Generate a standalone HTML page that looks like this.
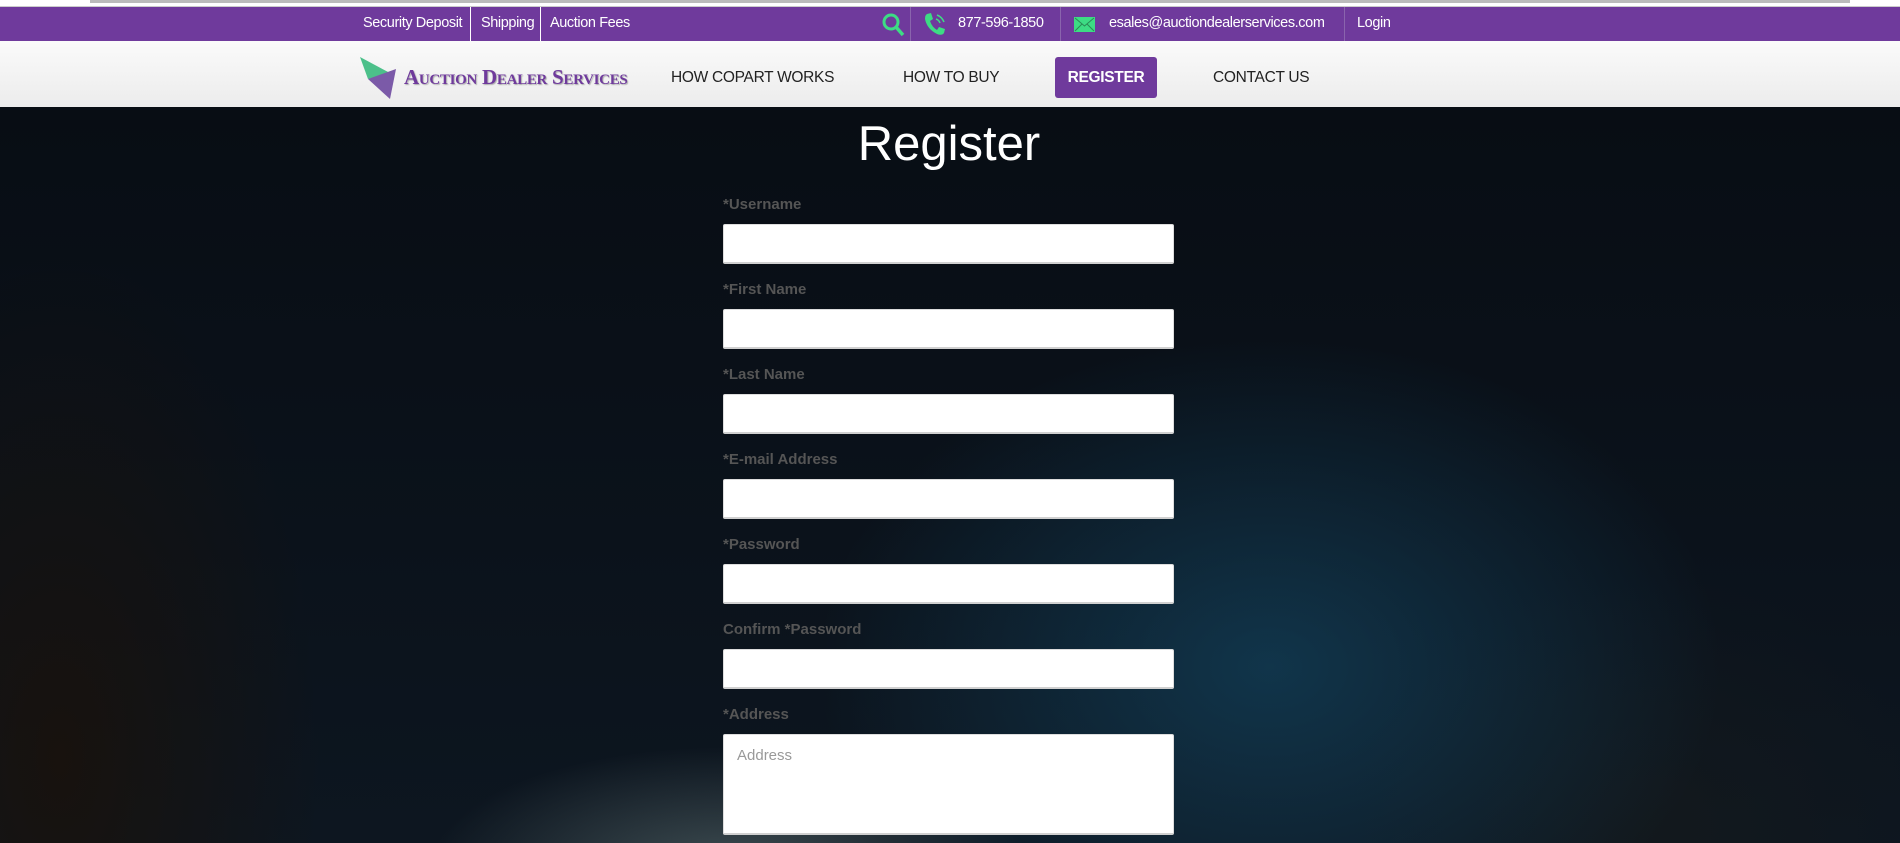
<!DOCTYPE html>
<html><head><meta charset="utf-8"><style>
*{margin:0;padding:0;box-sizing:border-box}
body{width:1900px;height:843px;overflow:hidden;font-family:"Liberation Sans",Arial,sans-serif;position:relative;background:#0b1018}
.topline{position:absolute;left:0;top:0;width:1900px;height:7px;background:#fff;border-bottom:1px solid #ccc}
.topline:before{content:"";position:absolute;left:90px;right:50px;top:0;height:3px;background:#bbb}
.bar{position:absolute;top:7px;left:0;width:1900px;height:34px;background:#6f3a9c;color:#fff;font-size:14.5px;letter-spacing:-0.4px}
.bar span{position:absolute;top:8px;white-space:nowrap}
.sep{position:absolute;top:0;width:1px;height:34px;background:#fff}
.sep2{position:absolute;top:0;width:1px;height:34px;background:#8a64ad}
.nav{position:absolute;top:41px;left:0;width:1900px;height:66px;background:linear-gradient(#fafafa,#ececec)}
.nav .it{position:absolute;top:28px;font-size:15.5px;color:#222;letter-spacing:-0.3px}
.reg{position:absolute;left:1055px;top:16px;width:102px;height:41px;background:#6f3a9c;border-radius:3px;color:#fff;font-weight:bold;font-size:15.5px;letter-spacing:-0.3px;text-align:center;line-height:41px}
.main{position:absolute;top:107px;left:0;width:1900px;height:736px;
background:
radial-gradient(ellipse 300px 120px at 730px 760px,rgba(110,130,130,.5),transparent),
radial-gradient(ellipse 450px 330px at 1270px 560px,rgba(20,75,105,.6),transparent),
radial-gradient(ellipse 300px 250px at 1650px 720px,rgba(20,25,28,.8),transparent),
radial-gradient(ellipse 260px 500px at 60px 650px,rgba(25,18,12,.9),transparent),
linear-gradient(#080d14,#0d1620)}
h1{position:absolute;top:9px;left:0;width:1898px;text-align:center;color:#fff;font-weight:normal;font-size:49px}
label{position:absolute;left:723px;font-size:15px;font-weight:bold;color:#555}
.in{position:absolute;left:723px;width:451px;height:40px;background:#fff;border:1px solid #ddd;border-bottom:2px solid #d0d0d0;border-radius:2px}
.ta{height:101px;color:#999;font-size:15px;padding:12px 13px}
</style></head><body>
<div class="topline"></div>
<div class="bar">
<span style="left:363px">Security Deposit</span><div class="sep" style="left:470px"></div>
<span style="left:481px">Shipping</span><div class="sep" style="left:540px"></div>
<span style="left:550px">Auction Fees</span>
<svg style="position:absolute;left:881px;top:5px" width="24" height="25" viewBox="0 0 24 25"><circle cx="10" cy="10" r="7" fill="none" stroke="#3ddc84" stroke-width="3"/><line x1="15" y1="15" x2="22" y2="23" stroke="#3ddc84" stroke-width="3.5"/></svg>
<div class="sep2" style="left:910px"></div>
<svg style="position:absolute;left:922px;top:4px" width="26" height="26" viewBox="0 0 26 26"><path d="M5 3 L9 2 L11 8 L8 10 Q10 16 15 19 L17 16 L23 18 L22 22 Q20 25 15 23 Q5 18 3 8 Q3 4 5 3Z" fill="#3ddc84"/><path d="M14 8 Q17 9 18 12 M15 4 Q20 6 22 11" fill="none" stroke="#3ddc84" stroke-width="1.6"/></svg>
<span style="left:958px">877-596-1850</span>
<div class="sep2" style="left:1060px"></div>
<svg style="position:absolute;left:1074px;top:10px" width="21" height="15" viewBox="0 0 21 15"><rect width="21" height="15" fill="#3ddc84"/><path d="M1 1 L10.5 9 L20 1 M1 14 L8 7 M20 14 L13 7" stroke="#2a8a55" fill="none" stroke-width="1"/></svg>
<span style="left:1109px">esales@auctiondealerservices.com</span>
<div class="sep2" style="left:1344px"></div>
<span style="left:1357px">Login</span>
</div>
<div class="nav">
<svg style="position:absolute;left:360px;top:16px" width="42" height="42" viewBox="0 0 42 42"><polygon points="0,0 30,16 8,22" fill="#4cc08a"/><polygon points="8,22 36,12 30,42" fill="#7b5aa8"/></svg>
<div style="position:absolute;left:404px;top:24px;font-family:'Liberation Serif',serif;font-weight:bold;color:#6f3a9c;font-size:21px;font-variant:small-caps;letter-spacing:-0.3px;text-shadow:1px 1px 1px #aaa;white-space:nowrap">Auction Dealer Services</div>
<div class="it" style="left:671px">HOW COPART WORKS</div>
<div class="it" style="left:903px">HOW TO BUY</div>
<div class="reg">REGISTER</div>
<div class="it" style="left:1213px">CONTACT US</div>
</div>
<div class="main">
<h1>Register</h1>
</div>
<label style="top:196px">*Username</label><div class="in" style="top:224px"></div>
<label style="top:281px">*First Name</label><div class="in" style="top:309px"></div>
<label style="top:366px">*Last Name</label><div class="in" style="top:394px"></div>
<label style="top:451px">*E-mail Address</label><div class="in" style="top:479px"></div>
<label style="top:536px">*Password</label><div class="in" style="top:564px"></div>
<label style="top:621px">Confirm *Password</label><div class="in" style="top:649px"></div>
<label style="top:706px">*Address</label><div class="in ta" style="top:734px">Address</div>
</body></html>
